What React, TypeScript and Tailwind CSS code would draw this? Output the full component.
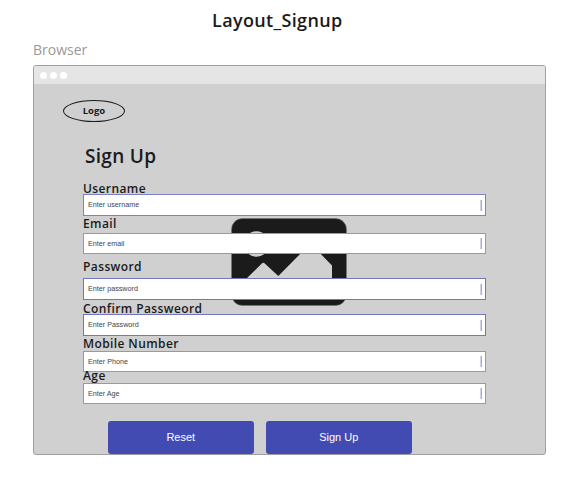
const fields = [
  { label: 'Username', hint: 'Enter username', gap: 'mt-0', labelH: 'h-[14px]', inputH: 'h-[22px]', border: 'border-[#7b82c6]' },
  { label: 'Email', hint: 'Enter email', gap: '-mt-px', labelH: 'h-[18px]', inputH: 'h-[21px]', border: 'border-[#8f96cd]' },
  { label: 'Password', hint: 'Enter password', gap: 'mt-1', labelH: 'h-5', inputH: 'h-[22px]', border: 'border-[#6f77c2]' },
  { label: 'Confirm Passweord', hint: 'Enter Password', gap: 'mt-0', labelH: 'h-[14px]', inputH: 'h-[22px]', border: 'border-[#6f77c2]' },
  { label: 'Mobile Number', hint: 'Enter Phone', gap: '-mt-px', labelH: 'h-4', inputH: 'h-[21px]', border: 'border-[#8f96cd]' },
  { label: 'Age', hint: 'Enter Age', gap: '-mt-[5px]', labelH: 'h-4', inputH: 'h-[21px]', border: 'border-[#8f96cd]' },
];

function Placeholder() {
  return (
    <svg className="absolute left-[197px] top-[152px]" width="116" height="89" viewBox="231 218 116 89">
      <rect x="231.5" y="218.5" width="115" height="87" rx="11" fill="#1b1b1b" stroke="#777" strokeWidth=".5" />
      <circle cx="256.5" cy="244" r="12.7" fill="#d0d0d0" />
      <path d="M245 280 L261.8 263.5 Q263.3 262 264.8 263.5 L278.3 276 L308 246 Q310.5 243.5 313 246 L332 265.5 V291 H245 Z" fill="#d0d0d0" />
    </svg>
  );
}

export default function App() {
  return (
    <main className="flex h-[493px] w-[585px] flex-col overflow-hidden bg-white font-['Open_Sans',sans-serif] text-[#1b1b1b]">
      <h1 className="ml-[212px] mt-2 h-6 whitespace-nowrap text-[18px] font-semibold leading-6 tracking-[0.35px]">Layout_Signup</h1>
      <p className="ml-[33px] mt-2 h-[25px] text-[14px] leading-5 text-[#999]">Browser</p>
      <section className="relative ml-[33px] h-[390px] w-[513px] rounded-[3px] border border-[#a0a0a0] bg-[#d0d0d0]">
        <header className="flex h-[18px] items-center gap-[3px] rounded-t-[2px] bg-[#e5e5e5] pl-[6px]">
          <i className="size-[7px] rounded-full bg-white" />
          <i className="size-[7px] rounded-full bg-white" />
          <i className="size-[7px] rounded-full bg-white" />
        </header>
        <Placeholder />
        <div className="relative ml-[29px] mt-4 flex h-[22px] w-[62px] items-center justify-center rounded-[50%] border border-[#1b1b1b] text-[9.5px] font-bold leading-3">Logo</div>
        <h2 className="ml-[51px] mt-[22px] h-[36px] whitespace-nowrap text-[19px] font-semibold leading-6 tracking-[0.3px]">Sign Up</h2>
        <form className="relative ml-[49px] flex w-[403px] flex-col">
          {fields.map((f) => (
            <div key={f.label} className={f.gap}>
              <div className={`${f.labelH} whitespace-nowrap text-[12px] font-semibold leading-[18px] tracking-[0.4px]`}>{f.label}</div>
              <div className={`${f.inputH} ${f.border} flex items-center justify-between border bg-white pl-1 pr-[3px]`}>
                <span className="font-['Liberation_Sans',sans-serif] text-[7.2px] leading-[10px] text-[#444]">{f.hint}</span>
                <i className="h-[11px] w-[2px] border-l border-[#d0d3ec] bg-[#a6abd8]" />
              </div>
            </div>
          ))}
        </form>
        <div className="ml-[74px] mt-[17px] flex gap-[12.5px] font-['Liberation_Sans',sans-serif] text-[11px] text-white">
          <button className="h-[33px] w-[145.5px] rounded-[3px] bg-[#424bb2]">Reset</button>
          <button className="h-[33px] w-[145.5px] rounded-[3px] bg-[#424bb2]">Sign Up</button>
        </div>
      </section>
    </main>
  );
}
